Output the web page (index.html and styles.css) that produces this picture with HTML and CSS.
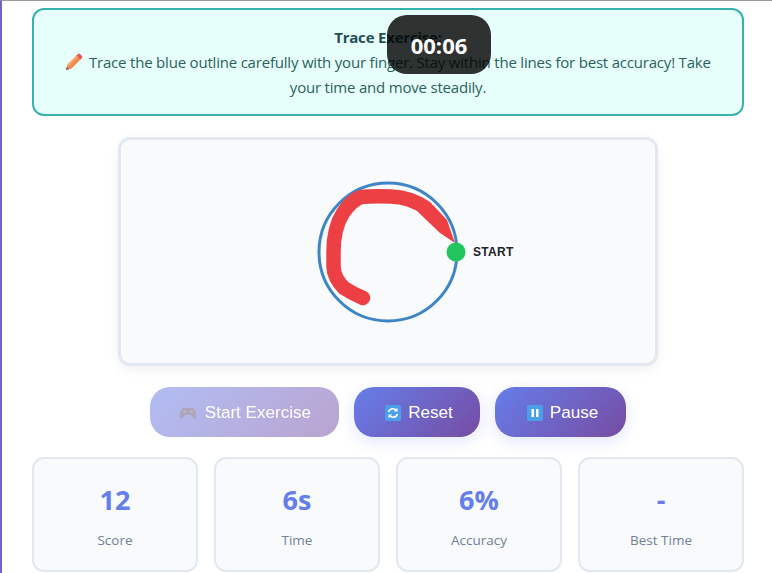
FILE: index.html
```html
<!DOCTYPE html>
<html lang="en">
<head>
<meta charset="utf-8">
<title>Trace Exercise</title>
<link rel="stylesheet" href="styles.css">
</head>
<body>
<main class="page">
  <section class="notice">
    <strong class="notice-title">Trace Exercise:</strong>
    <p class="notice-text"><svg class="pencil" viewBox="0 0 18 18" aria-hidden="true"><path d="M1 17l1.500-5.500L12 2l4 4-9.500 9.500z" fill="#f0894f"/><path d="M2.500 11.500L12 2l1.500 1.500L4 13z" fill="#f7a871"/><path d="M11.500 2.500l1.500-1.500a1.500 1.500 0 0 1 2 0l2 2a1.500 1.500 0 0 1 0 2l-1.500 1.500z" fill="#e8565c"/><path d="M1 17l.8-3 2.200 2.200z" fill="#6b5a4e"/></svg> Trace the blue outline carefully with your finger. Stay within the lines for best accuracy! Take your time and move steadily.</p>
  </section>
  <div class="timer">00:06</div>

  <section class="board">
    <svg class="drawing" viewBox="0 0 534 223" aria-label="Tracing canvas">
      <circle class="outline" cx="267" cy="112" r="69"/>
      <g class="trace">
        <path class="taper" d="M334 103 L326 80 L312 65 L297 72 L319 93 Z"/>
        <path class="full" d="M305 68 C296 62 285 57 270 56.500 C258 56 248 56 240 57 C231 60 226 67 222 73 C215 84 212.500 97 212.500 112 L212.500 127 C213 137 219 144 223 148 C229 152 235 155 242 158"/>
      </g>
      <circle class="start-dot" cx="335" cy="112" r="9.500"/>
      <text class="start-label" x="352" y="116">START</text>
    </svg>
  </section>

  <nav class="actions">
    <button class="btn btn-disabled" type="button">
      <svg class="icon icon-game" viewBox="0 0 18 18" aria-hidden="true"><path d="M5 4h8c2.500 0 3.500 2 4 5.500.4 3 .2 5-1.200 5-1.500 0-2.300-2.500-3.800-3.500H6c-1.500 1-2.300 3.500-3.800 3.500C.8 14.500.6 12.500 1 9.500 1.500 6 2.500 4 5 4z" fill="#5f4f78"/><circle cx="5.500" cy="7.500" r="1.300" fill="#8d7a9e"/><circle cx="12.500" cy="7.500" r="1.300" fill="#8d7a9e"/></svg>
      Start Exercise
    </button>
    <button class="btn" type="button">
      <svg class="icon" viewBox="0 0 16 16" aria-hidden="true"><rect width="16" height="16" rx="1.500" fill="#4a9fe8"/><path d="M3.500 7a4.600 4.600 0 0 1 8-1.500M12.500 9a4.600 4.600 0 0 1-8 1.500" fill="none" stroke="#fff" stroke-width="1.700"/><path d="M12.500 2.800v3.700H8.800zM3.500 13.200V9.500h3.700z" fill="#fff"/></svg>
      Reset
    </button>
    <button class="btn" type="button">
      <svg class="icon" viewBox="0 0 16 16" aria-hidden="true"><rect width="16" height="16" rx="1.500" fill="#4a9fe8"/><rect x="4.500" y="4" width="2.500" height="8" fill="#fff"/><rect x="9" y="4" width="2.500" height="8" fill="#fff"/></svg>
      Pause
    </button>
  </nav>

  <section class="stats">
    <div class="stat"><div class="stat-value">12</div><div class="stat-label">Score</div></div>
    <div class="stat"><div class="stat-value">6s</div><div class="stat-label">Time</div></div>
    <div class="stat"><div class="stat-value">6%</div><div class="stat-label">Accuracy</div></div>
    <div class="stat"><div class="stat-value">-</div><div class="stat-label">Best Time</div></div>
  </section>
</main>
</body>
</html>
```
FILE: styles.css
```css
* { box-sizing: border-box; }

html, body { height: 100%; }

body {
  margin: 0;
  overflow: hidden;
  background: #fff;
  border-top: 1px solid #9b9b9b;
  border-left: 2px solid #6f66c4;
  font-family: "Open Sans", "Noto Sans", sans-serif;
}

.page {
  position: relative;
  padding: 7px 28px 0 30px;
  display: flex;
  flex-direction: column;
}

.notice {
  height: 108px;
  padding: 15px 15px 0;
  background: #e6fffa;
  border: 2px solid #38b2ac;
  border-radius: 12px;
  text-align: center;
  font-size: 15px;
  letter-spacing: -.2px;
  line-height: 25px;
  color: #2c5f5d;
}

.notice-title {
  display: block;
  color: #234e52;
  font-weight: 700;
}

.notice-text { margin: 0; }

.pencil {
  width: 18px;
  height: 18px;
  vertical-align: -3px;
  margin-right: 2px;
}

.timer {
  position: absolute;
  top: 14px;
  left: 385px;
  width: 104px;
  height: 59px;
  display: flex;
  align-items: center;
  justify-content: center;
  background: rgba(0, 0, 0, .8);
  border-radius: 20px;
  color: #fff;
  font-size: 22px;
  font-weight: 700;
}

.board {
  align-self: center;
  width: 540px;
  height: 229px;
  margin-top: 21px;
  background: #f8fafc;
  border: 3px solid #e2e8f0;
  border-radius: 12px;
  box-shadow: 0 4px 12px rgba(0, 0, 0, .06);
}

.drawing {
  display: block;
  width: 534px;
  height: 223px;
}

.outline {
  fill: none;
  stroke: #3d85c6;
  stroke-width: 3;
}

.trace {
  fill: none;
  stroke: #ec4044;
  stroke-linecap: round;
  stroke-linejoin: round;
  filter: blur(.6px);
}

.taper {
  fill: #ec4044;
  stroke: none;
}

.full { stroke-width: 14.500; }

.start-dot { fill: #22c55e; }

.start-label {
  font-family: "Liberation Sans", Arial, sans-serif;
  font-size: 12px;
  font-weight: 700;
  letter-spacing: .3px;
  fill: #1f2328;
}

.actions {
  display: flex;
  justify-content: center;
  gap: 15px;
  margin-top: 21px;
}

.btn {
  height: 50px;
  padding: 1px 27.500px 0;
  display: flex;
  align-items: center;
  gap: 7px;
  border: 0;
  border-radius: 20px;
  background: linear-gradient(135deg, #667eea, #764ba2);
  box-shadow: 0 4px 15px rgba(102, 126, 234, .2);
  color: #fff;
  font-family: "Liberation Sans", Arial, sans-serif;
  font-size: 17.100px;
}

.btn-disabled {
  opacity: .5;
  box-shadow: none;
}

.icon {
  width: 16px;
  height: 16px;
  margin-left: 4px;
  flex: none;
}

.icon-game {
  width: 18px;
  height: 18px;
  margin-left: 1px;
  margin-right: 1px;
}

.stats {
  display: grid;
  grid-template-columns: repeat(4, 1fr);
  gap: 16px;
  margin-top: 20px;
}

.stat {
  height: 115px;
  padding-top: 20px;
  background: #f8fafc;
  border: 2px solid #e2e8f0;
  border-radius: 12px;
  text-align: center;
}

.stat-value {
  height: 42px;
  line-height: 42px;
  font-size: 27px;
  font-weight: 700;
  color: #667eea;
}

.stat-label {
  margin-top: 9px;
  font-size: 13.500px;
  line-height: 20px;
  color: #718096;
}
```
